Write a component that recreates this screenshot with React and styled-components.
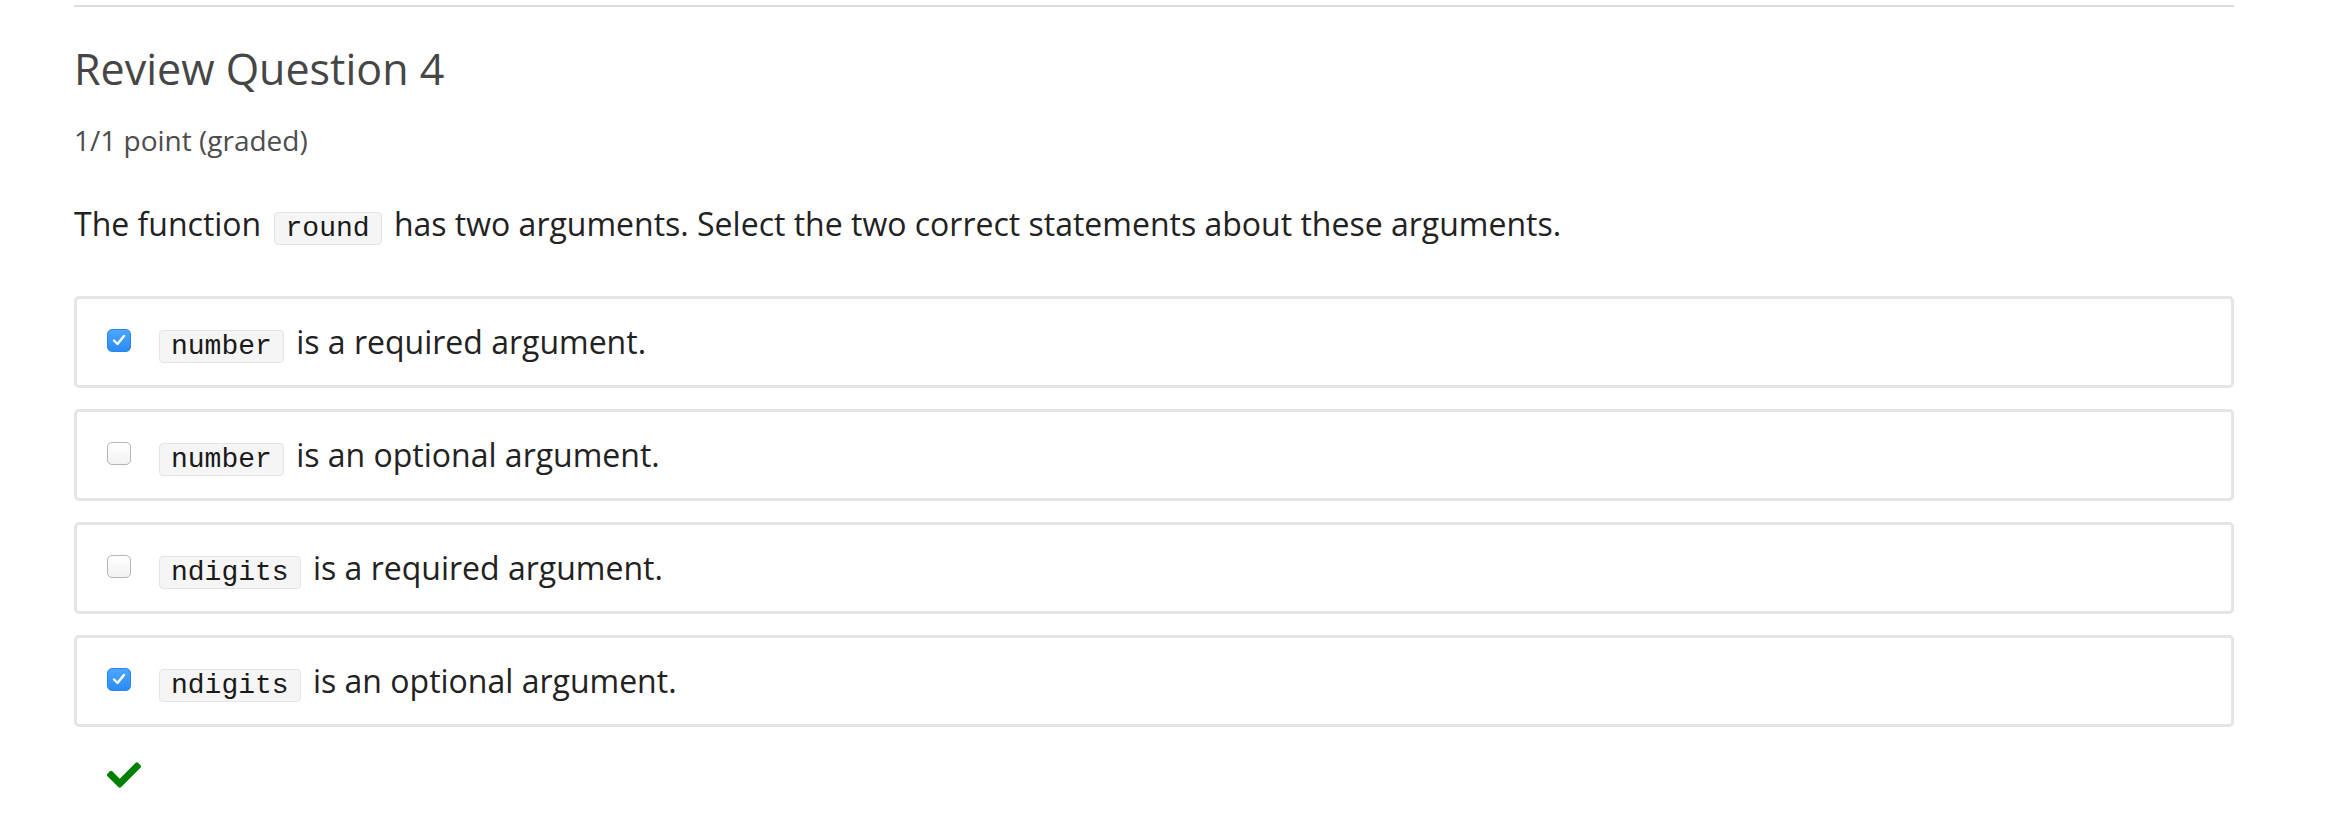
import React from 'react';
import styled, { createGlobalStyle } from 'styled-components';
import { FaCheck } from 'react-icons/fa';

const GlobalStyle = createGlobalStyle`
    body {
        margin: 0;
        background: #fff;
        font-family: "Open Sans", "Noto Sans", sans-serif;
    }
`;

const Page = styled.div`
    width: 2160px;
    padding: 5px 0 0 74px;
`;

const Rule = styled.hr`
    margin: 0;
    border: none;
    border-top: 2px solid #dddddd;
`;

const Title = styled.h2`
    margin: 36px 0 0;
    font-size: 43px;
    line-height: 52px;
    font-weight: 400;
    color: #464646;
`;

const Meta = styled.div`
    margin-top: 28px;
    font-size: 28px;
    line-height: 34px;
    color: #4d4d4d;
`;

const Question = styled.p`
    margin: 47px 0 0;
    font-size: 32px;
    line-height: 40px;
    color: #222;
`;

const Code = styled.code`
    display: inline-block;
    margin: 0 4px;
    padding: 0 11px;
    height: 33px;
    line-height: 31px;
    box-sizing: border-box;
    vertical-align: baseline;
    font-family: "Liberation Mono", "Courier New", monospace;
    font-size: 28px;
    color: #1a1a1a;
    background: #f5f5f5;
    border: 1px solid #e4e4e4;
    border-radius: 4px;
`;

const Choices = styled.div`
    margin-top: 51px;
    display: flex;
    flex-direction: column;
    gap: 21px;
`;

const Choice = styled.label`
    display: flex;
    align-items: center;
    height: 92px;
    box-sizing: border-box;
    padding: 0 30px;
    border: 3px solid #e5e5e5;
    border-radius: 5px;
    font-size: 32px;
    line-height: 40px;
    color: #222;
`;

const Box = styled.span`
    flex: none;
    width: 24px;
    height: 23px;
    margin: -4px 24px 0 0;
    box-sizing: border-box;
    border-radius: 5px;
    display: flex;
    align-items: center;
    justify-content: center;
    background: ${p => p.$checked ? 'linear-gradient(#4ca6ff, #2a8cf5)' : 'linear-gradient(#ffffff, #f2f2f2)'};
    border: 1px solid ${p => p.$checked ? '#2c86e8' : '#b4b4b4'};
`;

const Verdict = styled.div`
    margin-top: 31px;
    padding-left: 33px;
    height: 30px;
    color: #008000;
    font-size: 34px;
    display: flex;
    align-items: flex-start;
`;

const choices = [
    { code: 'number', text: 'is a required argument.', checked: true },
    { code: 'number', text: 'is an optional argument.', checked: false },
    { code: 'ndigits', text: 'is a required argument.', checked: false },
    { code: 'ndigits', text: 'is an optional argument.', checked: true },
];

function Tick() {
    return (
        <svg width="14" height="12" viewBox="0 0 14 12">
            <path d="M2 6.5 L5.5 10 L12 2" fill="none" stroke="#fff" strokeWidth="2.4" strokeLinecap="round" strokeLinejoin="round" />
        </svg>
    );
}

export default function App() {
    return (
        <>
            <GlobalStyle />
            <Page>
                <Rule />
                <Title>Review Question 4</Title>
                <Meta>1/1 point (graded)</Meta>
                <Question>
                    The function <Code>round</Code> has two arguments. Select the two correct statements about these arguments.
                </Question>
                <Choices>
                    {choices.map((c, i) => (
                        <Choice key={i}>
                            <Box $checked={c.checked}>{c.checked && <Tick />}</Box>
                            <span>
                                <Code>{c.code}</Code> {c.text}
                            </span>
                        </Choice>
                    ))}
                </Choices>
                <Verdict>
                    <FaCheck />
                </Verdict>
            </Page>
        </>
    );
}
